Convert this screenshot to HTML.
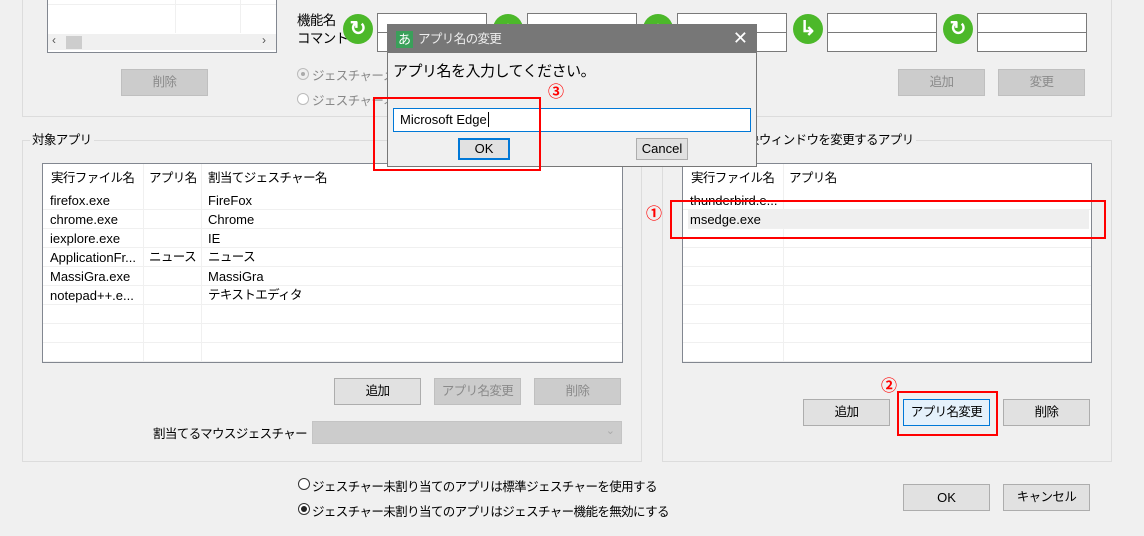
<!DOCTYPE html>
<html><head><meta charset="utf-8"><style>
*{box-sizing:border-box;margin:0;padding:0}
body{width:1144px;height:536px;background:#f0f0f0;position:relative;overflow:hidden;font-family:"Liberation Sans","Noto Sans CJK JP",sans-serif;font-size:13px;color:#000}
.j{letter-spacing:-0.6px;font-size:12.5px}
.a{position:absolute}
.grp{position:absolute;border:1px solid #dcdcdc}
.glab{position:absolute;background:#f0f0f0;padding:0 2px;line-height:14px}
.btn{position:absolute;height:27px;width:87px;background:#e1e1e1;border:1px solid #adadad;text-align:center;line-height:25px}
.dis{background:#cccccc;border-color:#bfbfbf;color:#8a8a8a}
.lv{position:absolute;background:#fff;border:1px solid #828790}
.tb{position:absolute;background:#fff;border:1px solid #7a7a7a;width:110px;height:20px}
.ic{position:absolute;width:30px;height:30px;border-radius:50%;background:#4cb82a;color:#fff;font-weight:bold;text-align:center;line-height:30px;font-size:20px}
.row{position:absolute;left:0;right:0;height:19px;border-bottom:1px solid #f0f0f0}
.cell{position:absolute;line-height:19px;white-space:nowrap}
.vl{position:absolute;top:0;bottom:0;width:1px;background:#f0f0f0}
.red{position:absolute;border:2px solid #ff0000}
.num{position:absolute;color:#ff0000;font-size:16px;font-weight:bold}
.rad{position:absolute;width:12px;height:12px;border:1px solid #333;border-radius:50%;background:#fff}
</style></head><body>

<div class="grp" style="left:22px;top:-2px;width:1090px;height:119px"></div>
<div class="lv" style="left:47px;top:-2px;width:230px;height:55px">
 <div class="a" style="left:0;right:0;top:5px;height:1px;background:#f0f0f0"></div>
 <div class="a" style="left:127px;top:0;height:34px;width:1px;background:#f0f0f0"></div>
 <div class="a" style="left:192px;top:0;height:34px;width:1px;background:#f0f0f0"></div>
 <div class="a" style="left:0;right:0;top:35px;height:16px;background:#f0f0f0"></div>
 <div class="a" style="left:18px;top:37px;width:16px;height:13px;background:#cdcdcd"></div>
 <div class="a" style="left:4px;top:34px;font-size:12px;color:#555">‹</div>
 <div class="a" style="left:214px;top:34px;font-size:12px;color:#555">›</div>
</div>
<div class="btn dis j" style="left:121px;top:69px">削除</div>
<div class="a j" style="left:297px;top:12px;line-height:18px;font-size:13.5px">機能名<br>コマンド</div>

<div class="ic" style="left:343px;top:14px">↻</div>
<div class="tb" style="left:377px;top:13px"></div><div class="tb" style="left:377px;top:32px"></div>
<div class="ic" style="left:493px;top:14px">↓</div>
<div class="tb" style="left:527px;top:13px"></div><div class="tb" style="left:527px;top:32px"></div>
<div class="ic" style="left:643px;top:14px">↓</div>
<div class="tb" style="left:677px;top:13px"></div><div class="tb" style="left:677px;top:32px"></div>
<div class="ic" style="left:793px;top:14px">↳</div>
<div class="tb" style="left:827px;top:13px"></div><div class="tb" style="left:827px;top:32px"></div>
<div class="ic" style="left:943px;top:14px">↻</div>
<div class="tb" style="left:977px;top:13px"></div><div class="tb" style="left:977px;top:32px"></div>

<div class="rad" style="left:297px;top:68px;border-color:#bbb;background:#eee"><div class="a" style="left:3px;top:3px;width:4px;height:4px;border-radius:50%;background:#aaa"></div></div>
<div class="a j" style="left:312px;top:65px;color:#888">ジェスチャーメ</div>
<div class="rad" style="left:297px;top:93px;border-color:#bbb"></div>
<div class="a j" style="left:312px;top:90px;color:#888">ジェスチャーオ</div>
<div class="btn dis j" style="left:898px;top:69px">追加</div>
<div class="btn dis j" style="left:998px;top:69px">変更</div>

<div class="grp" style="left:22px;top:140px;width:620px;height:322px"></div>
<div class="glab j" style="left:30px;top:133px">対象アプリ</div>
<div class="lv" style="left:42px;top:163px;width:581px;height:200px">
 <div class="vl" style="left:100px"></div><div class="vl" style="left:158px"></div>
 <div class="cell j" style="left:8px;top:5px">実行ファイル名</div><div class="cell j" style="left:106px;top:5px">アプリ名</div><div class="cell j" style="left:165px;top:5px">割当てジェスチャー名</div>
 <div class="row" style="top:27px"><div class="cell" style="left:7px">firefox.exe</div><div class="cell" style="left:165px">FireFox</div></div>
 <div class="row" style="top:46px"><div class="cell" style="left:7px">chrome.exe</div><div class="cell" style="left:165px">Chrome</div></div>
 <div class="row" style="top:65px"><div class="cell" style="left:7px">iexplore.exe</div><div class="cell" style="left:165px">IE</div></div>
 <div class="row" style="top:84px"><div class="cell" style="left:7px">ApplicationFr...</div><div class="cell j" style="left:106px">ニュース</div><div class="cell j" style="left:165px">ニュース</div></div>
 <div class="row" style="top:103px"><div class="cell" style="left:7px">MassiGra.exe</div><div class="cell" style="left:165px">MassiGra</div></div>
 <div class="row" style="top:122px"><div class="cell" style="left:7px">notepad++.e...</div><div class="cell j" style="left:165px">テキストエディタ</div></div>
 <div class="row" style="top:141px"></div><div class="row" style="top:160px"></div><div class="row" style="top:179px"></div>
</div>
<div class="btn j" style="left:334px;top:378px">追加</div>
<div class="btn dis j" style="left:434px;top:378px">アプリ名変更</div>
<div class="btn dis j" style="left:534px;top:378px">削除</div>
<div class="a j" style="left:153px;top:423px">割当てるマウスジェスチャー</div>
<div class="a" style="left:312px;top:421px;width:310px;height:23px;background:#cccccc;border:1px solid #c4c4c4"><span class="a" style="right:6px;top:2px;color:#aaa;font-size:11px">⌄</span></div>

<div class="grp" style="left:662px;top:140px;width:450px;height:322px"></div>
<div class="glab j" style="left:745px;top:133px">象ウィンドウを変更するアプリ</div>
<div class="lv" style="left:682px;top:163px;width:410px;height:200px">
 <div class="vl" style="left:100px"></div>
 <div class="cell j" style="left:8px;top:5px">実行ファイル名</div><div class="cell j" style="left:106px;top:5px">アプリ名</div>
 <div class="row" style="top:27px"><div class="cell" style="left:7px">thunderbird.e...</div></div>
 <div class="row" style="top:46px;background:#efefef;left:5px;right:2px"><div class="cell" style="left:2px">msedge.exe</div></div>
 <div class="row" style="top:65px"></div><div class="row" style="top:84px"></div><div class="row" style="top:103px"></div><div class="row" style="top:122px"></div><div class="row" style="top:141px"></div><div class="row" style="top:160px"></div><div class="row" style="top:179px"></div>
</div>
<div class="btn j" style="left:803px;top:399px">追加</div>
<div class="btn j" style="left:903px;top:399px;background:#e5f1fb;border-color:#0078d7">アプリ名変更</div>
<div class="btn j" style="left:1003px;top:399px">削除</div>

<div class="rad" style="left:298px;top:478px"></div>
<div class="a j" style="left:312px;top:476px">ジェスチャー未割り当てのアプリは標準ジェスチャーを使用する</div>
<div class="rad" style="left:298px;top:503px"><div class="a" style="left:2px;top:2px;width:6px;height:6px;border-radius:50%;background:#222"></div></div>
<div class="a j" style="left:312px;top:501px">ジェスチャー未割り当てのアプリはジェスチャー機能を無効にする</div>
<div class="btn" style="left:903px;top:484px">OK</div>
<div class="btn j" style="left:1003px;top:484px">キャンセル</div>

<div class="a" style="left:387px;top:24px;width:370px;height:143px;background:#f0f0f0;border:1px solid #777">
 <div class="a" style="left:0;top:0;right:0;height:28px;background:#777"></div>
 <div class="a" style="left:8px;top:6px;width:17px;height:17px;background:#3aa05a;color:#fff;font-size:13px;line-height:17px;text-align:center">あ</div>
 <div class="a j" style="left:30px;top:6px;color:#eee;line-height:17px">アプリ名の変更</div>
 <div class="a" style="right:8px;top:3px;color:#fff;font-size:18px;line-height:20px">✕</div>
 <div class="a" style="left:5px;top:35px;font-size:15px;letter-spacing:-0.5px">アプリ名を入力してください。</div>
 <div class="a" style="left:5px;top:83px;width:358px;height:24px;background:#fff;border:1px solid #0078d7;padding-left:6px;line-height:22px">Microsoft Edge<span style="border-left:1px solid #000;margin-left:1px"></span></div>
 <div class="btn" style="left:70px;top:113px;width:52px;height:22px;line-height:18px;border:2px solid #0078d7">OK</div>
 <div class="btn" style="left:248px;top:113px;width:52px;height:22px;line-height:20px">Cancel</div>
</div>

<div class="red" style="left:373px;top:97px;width:168px;height:74px"></div>
<div class="num" style="left:548px;top:78px">③</div>
<div class="red" style="left:670px;top:200px;width:436px;height:39px"></div>
<div class="num" style="left:646px;top:200px">①</div>
<div class="red" style="left:897px;top:391px;width:101px;height:45px"></div>
<div class="num" style="left:881px;top:372px">②</div>
</body></html>
